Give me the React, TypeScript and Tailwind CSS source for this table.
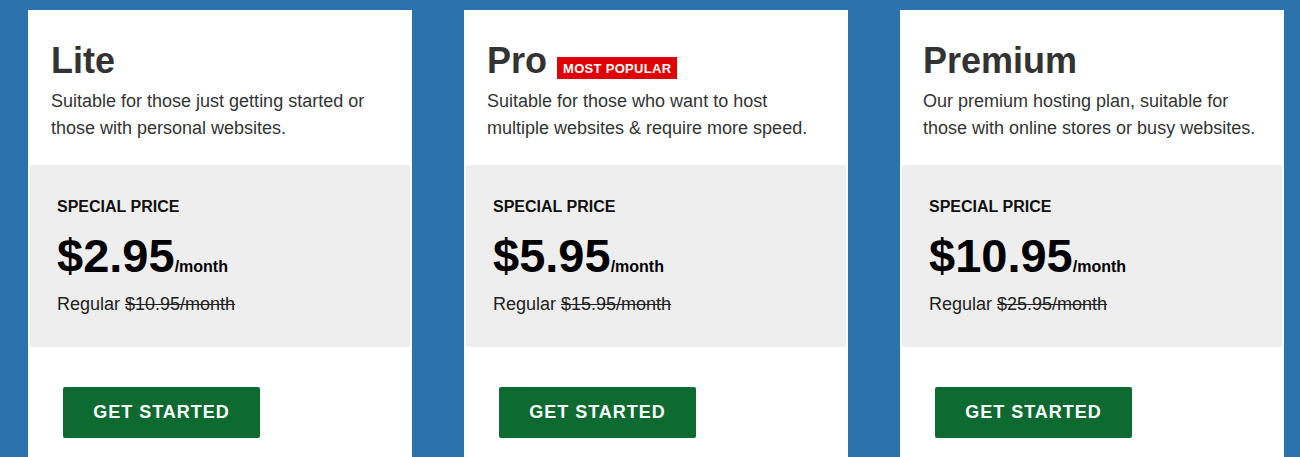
const plans = [
  {
    name: 'Lite',
    popular: false,
    desc: ['Suitable for those just getting started or', 'those with personal websites.'],
    price: '$2.95',
    regular: '$10.95/month',
  },
  {
    name: 'Pro',
    popular: true,
    desc: ['Suitable for those who want to host', 'multiple websites & require more speed.'],
    price: '$5.95',
    regular: '$15.95/month',
  },
  {
    name: 'Premium',
    popular: false,
    desc: ['Our premium hosting plan, suitable for', 'those with online stores or busy websites.'],
    price: '$10.95',
    regular: '$25.95/month',
  },
];

function PlanCard({ plan }: { plan: (typeof plans)[number] }) {
  return (
    <div className="w-[384px] shrink-0 bg-white flex flex-col">
      {/* header */}
      <div className="h-[155px] pl-[23px] pt-[31px]">
        <div className="flex items-baseline gap-[10px]">
          <h2 className="text-[36px] leading-[40px] font-bold text-[#333]">{plan.name}</h2>
          {plan.popular && (
            <span className="bg-[#e00000] text-white text-[13px] leading-[22px] h-[22px] px-[6px] pt-[1px] font-bold tracking-[0.3px] uppercase">
              Most Popular
            </span>
          )}
        </div>
        <p className="mt-[7px] text-[18px] leading-[27px] text-[#333]">
          {plan.desc[0]}
          <br />
          {plan.desc[1]}
        </p>
      </div>

      {/* price block */}
      <div className="h-[182px] mx-[2px] bg-[#eeeeee] pl-[27px] pt-[32px]">
        <div className="text-[16px] leading-[20px] font-bold text-[#111] uppercase">Special Price</div>
        <div className="mt-[16px] flex items-baseline text-black">
          <span className="text-[47px] leading-[46px] font-bold">{plan.price}</span>
          <span className="text-[16px] font-bold">/month</span>
        </div>
        <div className="mt-[13px] text-[18px] leading-[24px] text-[#222]">
          Regular <span className="line-through">{plan.regular}</span>
        </div>
      </div>

      {/* action */}
      <div className="pl-[35px] pt-[40px]">
        <button className="w-[197px] h-[51px] rounded-[2px] bg-[#0d6a31] text-white text-[18px] font-bold tracking-[1px] uppercase">
          Get Started
        </button>
      </div>
    </div>
  );
}

export default function App() {
  return (
    <div
      className="w-[1300px] h-[457px] overflow-hidden bg-[#2b73ad] flex gap-[52px] pl-[28px] pt-[10px]"
      style={{ fontFamily: '"Liberation Sans", Arial, sans-serif' }}
    >
      {plans.map((p) => (
        <PlanCard key={p.name} plan={p} />
      ))}
    </div>
  );
}
